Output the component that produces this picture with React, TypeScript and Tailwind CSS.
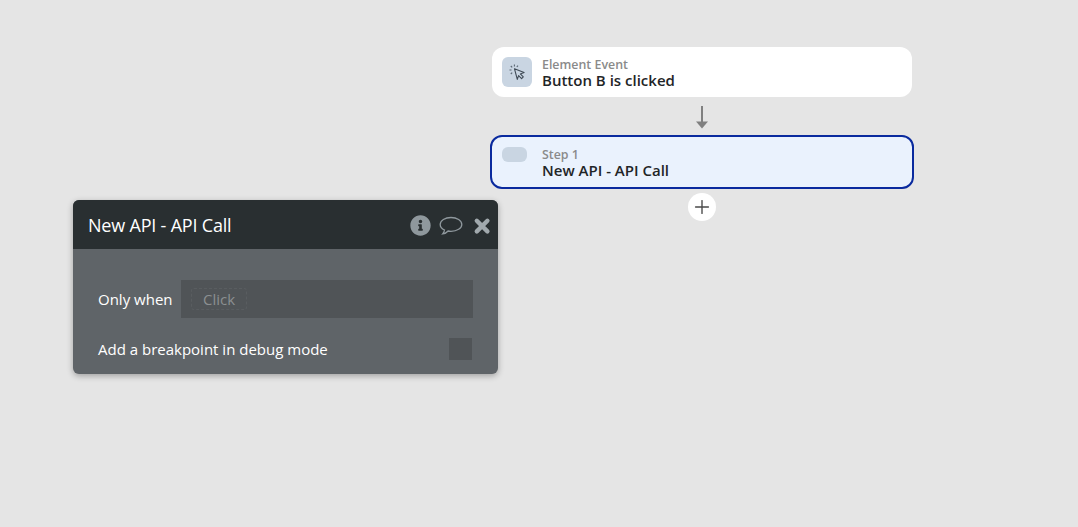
import { Plus } from "lucide-react";
import { FaInfoCircle } from "react-icons/fa";

const font = "font-['Open_Sans',sans-serif]";

function ActionCard({
  label,
  title,
  selected,
  children,
}: {
  label: string;
  title: string;
  selected?: boolean;
  children: React.ReactNode;
}) {
  return (
    <div
      className={[
        "flex rounded-[12px] pl-[10px] pt-[10px]",
        selected
          ? "w-[424px] h-[54px] bg-[#eaf2fd] border-2 border-[#0a2a9e]"
          : "w-[420px] h-[50px] bg-white",
      ].join(" ")}
    >
      {children}
      <div className="flex flex-col">
        <span className="text-[12.4px] leading-[15px] font-semibold text-[#8a8a8a]">
          {label}
        </span>
        <span className="text-[15px] leading-[17px] font-semibold text-[#1f2527]">
          {title}
        </span>
      </div>
    </div>
  );
}

export default function App() {
  return (
    <div className={`relative w-[1078px] h-[527px] overflow-hidden bg-[#e5e5e5] ${font}`}>
      {/* Workflow column */}
      <div className="absolute left-[490px] top-[47px] w-[424px] flex flex-col items-center">
        <ActionCard label="Element Event" title="Button B is clicked">
          <div className="w-[30px] h-[30px] mr-[10px] rounded-[6px] bg-[#c9d5e2] flex items-center justify-center">
            <svg width="18" height="18" viewBox="0 0 18 18" fill="none" stroke="#3f4a55" strokeWidth="1.1">
              <path d="M6.5 5.8l9.6 3.8-3.8 1.3 3 3-1.7 1.7-3-3-1.3 3.8z" strokeLinejoin="round" />
              <path d="M6.4 1.5v2M2.8 3l1.4 1.4M1.5 7h2M2.8 11l1.4-1.4M10 2.6L8.8 4" stroke="#5a6672" />
            </svg>
          </div>
        </ActionCard>

        <svg width="14" height="24" viewBox="0 0 14 24" className="mt-[9px] mb-[5px]">
          <path d="M7 0v16" stroke="#808080" strokeWidth="2" fill="none" />
          <path d="M1 15.5h12L7 22.5z" fill="#808080" />
        </svg>

        <ActionCard label="Step 1" title="New API - API Call" selected>
          <div className="w-[25px] h-[15px] mr-[15px] rounded-[6px] bg-[#c9d5e2]" />
        </ActionCard>

        <div className="mt-[4px] w-[28px] h-[28px] rounded-full bg-white flex items-center justify-center text-[#4a4a4a]">
          <Plus size={22} strokeWidth={1.5} />
        </div>
      </div>

      {/* Property editor */}
      <div className="absolute left-[73px] top-[200px] w-[425px] h-[174px] rounded-[6px] bg-[#5f6468] shadow-[0_2px_6px_rgba(0,0,0,0.3)] overflow-hidden">
        <div className="h-[49px] bg-[#292f31] flex items-center pl-[15px] pr-[7px] pt-[2px]">
          <span className="flex-1 text-[18px] text-white tracking-[-0.2px]">New API - API Call</span>
          <FaInfoCircle size={21} className="text-[#8f989d]" />
          <svg width="24" height="20" viewBox="0 0 24 20" className="ml-[8px] mt-[1px] text-[#8f989d]">
            <path
              d="M12 1.5C6 1.5 1.2 4.4 1.2 8.4c0 2.4 1.7 4.4 4.3 5.6-.2 1.5-.9 2.8-1.8 3.9 2.2-.3 4.2-1.5 5.4-2.9 1 .2 1.9.3 2.9.3 6 0 10.8-3 10.8-6.9S18 1.5 12 1.5z"
              fill="none"
              stroke="currentColor"
              strokeWidth="1.3"
            />
          </svg>
          <svg width="18" height="18" viewBox="0 0 18 18" className="ml-[10px] text-[#a1a9ad]">
            <path d="M3.8 3.8l10.6 10.6M14.4 3.8L3.8 14.4" stroke="currentColor" strokeWidth="4.4" strokeLinecap="round" />
          </svg>
        </div>

        <div className="pt-[31px] pl-[25px] pr-[25px]">
          <div className="flex items-center">
            <span className="w-[83px] text-[15px] font-medium text-white">Only when</span>
            <div className="flex-1 h-[38px] bg-[#505457] flex items-center pl-[10px]">
              <span className="h-[22px] px-[11px] flex items-center rounded-[3px] border border-dashed border-[#595d60] text-[15px] text-[#8b8f91]">
                Click
              </span>
            </div>
          </div>
          <div className="mt-[20px] flex items-center justify-between">
            <span className="text-[15px] font-medium text-white">Add a breakpoint in debug mode</span>
            <div className="w-[23px] h-[22px] mr-[1px] bg-[#505457]" />
          </div>
        </div>
      </div>
    </div>
  );
}
